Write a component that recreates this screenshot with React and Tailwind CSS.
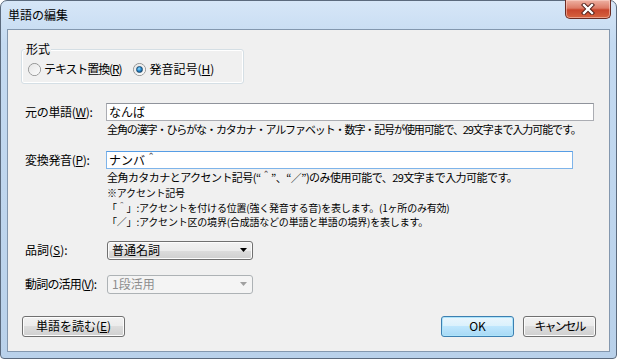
import React from "react";

const F = { fontFamily: '"Noto Sans CJK JP", "Noto Sans", sans-serif' };

function Radio({ checked }) {
  return (
    <div className="w-[13px] h-[13px] rounded-full border border-[#8e8f8f] bg-[linear-gradient(135deg,#d4d4d4,#ffffff)] flex items-center justify-center shrink-0">
      <div className="w-[11px] h-[11px] rounded-full bg-[linear-gradient(135deg,#e6e6e6,#fbfbfb)] flex items-center justify-center">
        {checked && (
          <div className="w-[7px] h-[7px] rounded-full border border-[#1c4a6e] bg-[radial-gradient(circle_at_40%_35%,#9be0ff_0%,#2b8fd4_45%,#0b3e69_100%)]" />
        )}
      </div>
    </div>
  );
}

function U({ children }) {
  return <span className="underline underline-offset-[1px]">{children}</span>;
}

function Btn({ children, w, def, className = "" }) {
  return (
    <div
      className={
        "h-[21px] rounded-[3px] border flex items-center justify-center text-[12px] leading-none text-black " +
        (def
          ? "border-[#3c7fb1] bg-[linear-gradient(#eaf6fd_0%,#d9f0fc_50%,#bee6fd_50%,#a7d9f5_100%)] shadow-[inset_0_0_0_1px_#aee4fa] "
          : "border-[#707070] bg-[linear-gradient(#f2f2f2_0%,#ebebeb_50%,#dddddd_50%,#cfcfcf_100%)] shadow-[inset_0_0_0_1px_#fcfcfc] ") +
        w +
        " " +
        className
      }
    >
      {children}
    </div>
  );
}

export default function App() {
  return (
    <div className="w-[617px] h-[359px] bg-white" style={F}>
      <div className="w-full h-full rounded-t-[7px] rounded-b-[4px] border border-[#5b6a7d] bg-[linear-gradient(180deg,#d6e6f7_0%,#c4daf1_12%,#b9d1ea_100%)] flex flex-col">
        {/* title bar */}
        <div className="h-[28px] flex items-start justify-between shrink-0">
          <div className="pl-[7px] pt-[6px] text-[12px] leading-[16px] text-black">単語の編集</div>
          <div className="mr-[5px] w-[46px] h-[19px] -mt-[1px] rounded-b-[5px] border border-[#6b2b22] border-t-0 bg-[linear-gradient(180deg,#eeb2a4_0%,#dd7b66_45%,#c8452c_55%,#d6633f_100%)] shadow-[inset_0_0_0_1px_rgba(255,220,210,0.5)] flex items-center justify-center">
            <svg width="14" height="12" viewBox="0 0 14 12">
              <path d="M3 2 L11 10 M11 2 L3 10" stroke="#4a1a14" strokeWidth="4.2" strokeLinecap="square" />
              <path d="M3 2 L11 10 M11 2 L3 10" stroke="#ffffff" strokeWidth="2.4" strokeLinecap="square" />
            </svg>
          </div>
        </div>
        {/* client */}
        <div className="flex-1 mx-[6px] mb-[6px] border border-[#8397ae] bg-[#f0f0f0] flex flex-col text-[12px] text-black">
          {/* group box */}
          <div className="relative ml-[13px] mt-[19px] w-[223px] h-[35px] rounded-[3px] border border-[#d5dfe5] shadow-[inset_0_0_0_1px_#ffffff]">
            <div className="absolute -top-[8px] left-[3px] px-[1px] bg-[#f0f0f0] leading-[14px]">形式</div>
            <div className="flex items-center pt-[12px] pl-[6px]">
              <Radio />
              <span className="ml-[3px] leading-[14px] tracking-[-1.1px]">
                テキスト置換(<U>R</U>)
              </span>
              <div className="ml-[11px]">
                <Radio checked />
              </div>
              <span className="ml-[4px] leading-[14px]">
                発音記号(<U>H</U>)
              </span>
            </div>
          </div>

          {/* row 1 */}
          <div className="mt-[19px] flex items-center h-[18px]">
            <div className="ml-[17px] w-[81px] leading-[14px] tracking-[-0.3px]">
              元の単語(<U>W</U>):
            </div>
            <div className="w-[488px] h-[18px] bg-white border border-[#abadb3] border-t-[#8f939b] flex items-center pl-[2px] leading-none">
              なんば
            </div>
          </div>
          <div className="ml-[99px] mt-[2px] text-[11px] leading-[12px] tracking-[-1.1px] whitespace-nowrap">
            全角の漢字・ひらがな・カタカナ・アルファベット・数字・記号が使用可能で、29文字まで入力可能です。
          </div>

          {/* row 2 */}
          <div className="mt-[16px] flex items-center h-[18px]">
            <div className="ml-[17px] w-[81px] leading-[14px] tracking-[-0.3px]">
              変換発音(<U>P</U>):
            </div>
            <div className="w-[467px] h-[18px] bg-white border border-[#7eb4ea] border-t-[#569de5] flex items-center pl-[2px] leading-none">
              ナンバ＾
            </div>
          </div>
          <div className="ml-[99px] mt-[2px] text-[11px] leading-[12px] tracking-[-0.55px] whitespace-nowrap">
            全角カタカナとアクセント記号(“＾”、“／”)のみ使用可能で、29文字まで入力可能です。
          </div>

          {/* notes */}
          <div className="ml-[99px] mt-[3px] text-[10px] leading-[14.5px] tracking-[-0.2px] whitespace-nowrap">
            <div>※アクセント記号</div>
            <div>「＾」:アクセントを付ける位置(強く発音する音)を表します。(1ヶ所のみ有効)</div>
            <div>「／」:アクセント区の境界(合成語などの単語と単語の境界)を表します。</div>
          </div>

          {/* select 1 */}
          <div className="mt-[11px] flex items-center h-[19px]">
            <div className="ml-[17px] w-[82px] leading-[14px]">
              品詞(<U>S</U>):
            </div>
            <div className="w-[146px] h-[19px] rounded-[3px] border border-[#707070] bg-[linear-gradient(#f2f2f2_0%,#ebebeb_50%,#dddddd_50%,#cfcfcf_100%)] shadow-[inset_0_0_0_1px_#fcfcfc] flex items-center justify-between pl-[4px] pr-[5px] leading-none">
              <span>普通名詞</span>
              <svg width="7" height="4" viewBox="0 0 7 4">
                <path d="M0 0 H7 L3.5 4 Z" fill="#000" />
              </svg>
            </div>
          </div>

          {/* select 2 */}
          <div className="mt-[15px] flex items-center h-[19px]">
            <div className="ml-[17px] w-[82px] leading-[14px] tracking-[-0.8px] whitespace-nowrap">
              動詞の活用(<U>V</U>):
            </div>
            <div className="w-[146px] h-[19px] rounded-[3px] border border-[#adb2b5] bg-[#f4f4f4] flex items-center justify-between pl-[4px] pr-[5px] leading-none text-[#8d8d8d]">
              <span>1段活用</span>
              <svg width="7" height="4" viewBox="0 0 7 4">
                <path d="M0 0 H7 L3.5 4 Z" fill="#a0a0a0" />
              </svg>
            </div>
          </div>

          {/* buttons */}
          <div className="mt-[22px] flex items-center">
            <Btn w="w-[103px]" className="ml-[14px]">
              単語を読む(<U>E</U>)
            </Btn>
            <div className="flex-1" />
            <Btn w="w-[73px]" def>
              OK
            </Btn>
            <Btn w="w-[73px]" className="ml-[9px] mr-[13px] tracking-[-2px]">
              キャンセル
            </Btn>
          </div>
        </div>
      </div>
    </div>
  );
}
